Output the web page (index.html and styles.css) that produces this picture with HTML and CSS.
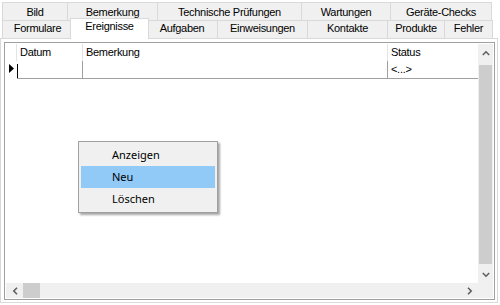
FILE: index.html
```html
<!DOCTYPE html>
<html lang="de">
<head>
<meta charset="utf-8">
<title>Ereignisse</title>
<link rel="stylesheet" href="styles.css">
</head>
<body>
<div class="tabctl">
  <div class="tabrow row1">
    <div class="tab t-bild">Bild</div>
    <div class="tab t-bem">Bemerkung</div>
    <div class="tab t-tech">Technische Prüfungen</div>
    <div class="tab t-wart">Wartungen</div>
    <div class="tab t-ger last">Geräte-Checks</div>
  </div>
  <div class="tabrow row2">
    <div class="tab t-form">Formulare</div>
    <div class="tab t-ereig selected">Ereignisse</div>
    <div class="tab t-aufg">Aufgaben</div>
    <div class="tab t-einw">Einweisungen</div>
    <div class="tab t-kont">Kontakte</div>
    <div class="tab t-prod">Produkte</div>
    <div class="tab t-fehl last">Fehler</div>
  </div>
  <div class="panel">
    <div class="grid">
      <div class="grid-main">
        <div class="grid-body">
          <div class="grow ghead">
            <div class="cell rowhdr"></div>
            <div class="cell c-datum">Datum</div>
            <div class="cell c-bem">Bemerkung</div>
            <div class="cell c-status">Status</div>
          </div>
          <div class="grow gdata">
            <div class="cell rowhdr">
              <svg class="cur" width="5" height="9" viewBox="0 0 5 9"><polygon points="0,0 5,4.5 0,9" fill="#000"/></svg>
            </div>
            <div class="cell c-datum"><span class="caret"></span></div>
            <div class="cell c-bem"></div>
            <div class="cell c-status">&lt;...&gt;</div>
          </div>
        </div>
        <div class="vscroll">
          <div class="sbtn">
            <svg width="8" height="6" viewBox="0 0 8 6"><polyline points="0.8,5 4,1.8 7.2,5" fill="none" stroke="#606060" stroke-width="1.6"/></svg>
          </div>
          <div class="vtrack"><div class="vthumb"></div></div>
          <div class="sbtn">
            <svg width="8" height="6" viewBox="0 0 8 6"><polyline points="0.8,1 4,4.2 7.2,1" fill="none" stroke="#606060" stroke-width="1.6"/></svg>
          </div>
        </div>
      </div>
      <div class="hscroll">
        <div class="hbtn">
          <svg width="6" height="8" viewBox="0 0 6 8"><polyline points="5,0.8 1.8,4 5,7.2" fill="none" stroke="#606060" stroke-width="1.6"/></svg>
        </div>
        <div class="hthumb"></div>
        <div class="htrack"></div>
        <div class="hbtn">
          <svg width="6" height="8" viewBox="0 0 6 8"><polyline points="1,0.8 4.2,4 1,7.2" fill="none" stroke="#606060" stroke-width="1.6"/></svg>
        </div>
        <div class="corner"></div>
      </div>
    </div>
  </div>
</div>

<div class="menu">
  <div class="mitem">Anzeigen</div>
  <div class="mitem active">Neu</div>
  <div class="mitem">Löschen</div>
</div>
</body>
</html>
```

FILE: styles.css
```css
html, body {
  margin: 0;
  padding: 0;
}
body {
  width: 500px;
  height: 305px;
  overflow: hidden;
  background: #ffffff;
  font-family: "Liberation Sans", Arial, sans-serif;
  font-size: 11px;
  letter-spacing: -0.3px;
  color: #000;
  position: relative;
}

/* ---------- tab control ---------- */
.tabctl {
  padding-top: 2px;
}
.tabrow {
  display: flex;
  align-items: flex-start;
  margin-left: 2px;
}
.tab {
  box-sizing: border-box;
  background: #f0f0f0;
  border-top: 1px solid #d9d9d9;
  border-left: 1px solid #d9d9d9;
  line-height: 13px;
  height: 18px;
  text-align: center;
  white-space: nowrap;
}
.tab.last {
  border-right: 1px solid #d9d9d9;
}
.row1 .tab {
  padding-top: 3px;
}
.row2 .tab {
  padding-top: 1px;
}
.t-bild { width: 65px; }
.t-bem  { width: 90px; }
.t-tech { width: 144px; }
.t-wart { width: 89px; }
.t-ger  { width: 102px; }

.t-form { width: 70px; }
.t-aufg { width: 71px; }
.t-einw { width: 90px; }
.t-kont { width: 80px; }
.t-prod { width: 57px; }
.t-fehl { width: 49px; }

.tab.selected {
  position: relative;
  z-index: 2;
  width: 79px;
  height: 21px;
  margin: -2px -3px -1px -2px;
  background: #ffffff;
  border-right: 1px solid #d9d9d9;
  padding-top: 1px;
}

.panel {
  box-sizing: border-box;
  width: 498px;
  height: 265px;
  border: 1px solid #d9d9d9;
  background: #ffffff;
  padding: 3px 0 0 3px;
}

/* ---------- grid ---------- */
.grid {
  box-sizing: border-box;
  width: 491px;
  height: 258px;
  border: 1px solid #a0a0a0;
  padding: 1px;
  display: flex;
  flex-direction: column;
  background: #fff;
}
.grid-main {
  flex: 1;
  display: flex;
  min-height: 0;
}
.grid-body {
  flex: 1;
  background: #fff;
}
.grow {
  display: flex;
  height: 17px;
  line-height: 17px;
}
.gdata {
  height: 18px;
}
.cell {
  box-sizing: border-box;
  white-space: nowrap;
  overflow: hidden;
  padding-left: 3px;
}
.rowhdr {
  width: 11px;
  padding: 0;
  border-right: 1px solid #e3e3e3;
}
.c-datum {
  width: 66px;
  border-right: 1px solid #e3e3e3;
}
.c-bem {
  width: 305px;
  border-right: 1px solid #e3e3e3;
}
.c-status {
  flex: 1;
}
.gdata .cell {
  border-bottom: 1px solid #a0a0a0;
}
.gdata .c-datum,
.gdata .c-bem {
  border-right-color: #a0a0a0;
}
.gdata .rowhdr {
  border-bottom: none;
  border-right-color: #ffffff;
  display: flex;
  align-items: flex-start;
  padding: 3px 0 0 3px;
}
.gdata .c-datum {
  padding-left: 0;
  display: flex;
  align-items: flex-start;
}
.caret {
  display: block;
  width: 1px;
  height: 14px;
  margin-top: 3px;
  background: #000;
}
.cur {
  display: block;
}

/* ---------- scrollbars ---------- */
.vscroll {
  width: 15px;
  display: flex;
  flex-direction: column;
  background: #f0f0f0;
}
.sbtn {
  height: 17px;
  display: flex;
  align-items: center;
  justify-content: center;
}
.vtrack {
  flex: 1;
  padding: 4px 1px 0 1px;
  box-sizing: border-box;
}
.vthumb {
  height: 199px;
  background: #cdcdcd;
}
.hscroll {
  height: 15px;
  display: flex;
  background: #f0f0f0;
}
.hbtn {
  width: 17px;
  display: flex;
  align-items: center;
  justify-content: center;
}
.hthumb {
  width: 17px;
  background: #cdcdcd;
}
.htrack {
  flex: 1;
}
.corner {
  width: 15px;
  background: #f0f0f0;
}

/* ---------- context menu ---------- */
.menu {
  position: absolute;
  left: 78px;
  top: 141px;
  width: 140px;
  box-sizing: border-box;
  background: #f0f0f0;
  border: 1px solid #a0a0a0;
  padding: 2px;
  box-shadow: 2px 2px 2px rgba(0, 0, 0, 0.35);
  font-family: "Noto Sans", "Liberation Sans", sans-serif;
  font-size: 11px;
  letter-spacing: 0;
  z-index: 5;
}
.mitem {
  height: 22px;
  line-height: 22px;
  padding-left: 31px;
}
.mitem.active {
  background: #91c9f7;
}
```
